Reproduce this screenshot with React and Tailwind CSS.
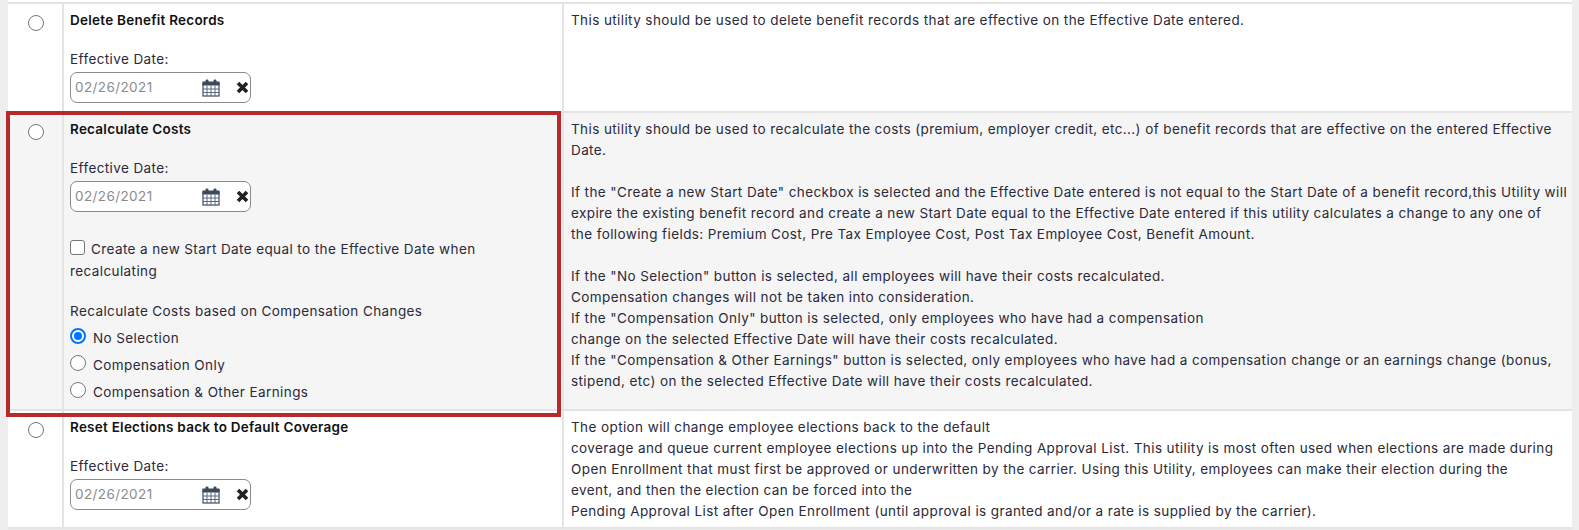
import React from 'react'

const DateField = () => (
  <div className="mt-[3px] flex h-[31px] w-[181px] items-center rounded-[7px] border border-[#8a8a8a] bg-white pl-1 pr-[1px]">
    <span className="text-[#8b8b8b]">02/26/2021</span>
    <svg className="ml-auto" width="18" height="18" viewBox="0 0 18 18">
      <rect x="1" y="4" width="16" height="13" fill="#fff" stroke="#3b4a5c" strokeWidth="1.2" />
      <rect x="0.5" y="2.5" width="17" height="4" fill="#3b4a5c" />
      <rect x="3.5" y="0.5" width="3" height="5" rx="1.2" fill="#3b4a5c" />
      <rect x="11.5" y="0.5" width="3" height="5" rx="1.2" fill="#3b4a5c" />
      <path d="M1 10h16M1 13.5h16M5 6.5V17M9 6.5V17M13 6.5V17" stroke="#5a6b80" strokeWidth="1" />
    </svg>
    <svg className="ml-[16px]" width="13" height="13" viewBox="0 0 13 13">
      <path d="M2 2l9 9M11 2l-9 9" stroke="#222" strokeWidth="3.6" />
    </svg>
  </div>
)

const Radio = ({ checked }) => (
  <span
    className={
      checked
        ? 'mb-[6px] inline-block h-[16px] w-[16px] shrink-0 rounded-full border-2 border-[#0075ff] bg-white p-[2px]'
        : 'inline-block h-[16px] w-[16px] shrink-0 rounded-full border border-[#767676] bg-white'
    }
  >
    {checked && <span className="block h-full w-full rounded-full bg-[#0075ff]" />}
  </span>
)

const Option = ({ checked, label }) => (
  <div className="flex h-[27px] items-center gap-[7px]">
    {checked ? <Radio checked /> : <span className="mb-[6px] flex"><Radio /></span>}
    {label}
  </div>
)

const Row = ({ title, children, text, shaded, height }) => (
  <div className={`flex border-b-2 border-[#e4e4e4] ${shaded ? 'bg-[#f5f5f5]' : 'bg-white'} ${height}`}>
    <div className="flex w-[56px] shrink-0 justify-center border-r-2 border-[#e4e4e4] pl-[2px] pt-[11px]">
      <Radio />
    </div>
    <div className="w-[500px] shrink-0 border-r-2 border-[#e4e4e4] pl-[6px] pt-[6px]">
      <div className="font-semibold leading-[20px] tracking-[0.25px] text-[#111]">{title}</div>
      <div className="mt-[19px] leading-[20px]">Effective Date:</div>
      <DateField />
      {children}
    </div>
    <div className="min-w-0 flex-1 pl-[7px] pr-[2px] pt-[6px] leading-[21px]">{text}</div>
  </div>
)

export default function App() {
  return (
    <div className="relative h-[530px] w-[1579px] overflow-hidden bg-[#eeeeee] pl-[8px] pr-[7px] font-['Inter',sans-serif] text-[13.5px] tracking-[0.4px] text-[#2a2a3a]">
      <div className="h-[2px] bg-white" />
      <div className="border-t-2 border-[#e4e4e4]">
        <Row
          title="Delete Benefit Records"
          height="h-[109px]"
          text="This utility should be used to delete benefit records that are effective on the Effective Date entered."
        />
        <Row
          title="Recalculate Costs"
          shaded
          height="h-[298px]"
          text={
            <>
              This utility should be used to recalculate the costs (premium, employer credit, etc...) of benefit records that are effective on the entered Effective
              <br />
              Date.
              <br /><br />
              If the "Create a new Start Date" checkbox is selected and the Effective Date entered is not equal to the Start Date of a benefit record,this Utility will
              <br />
              expire the existing benefit record and create a new Start Date equal to the Effective Date entered if this utility calculates a change to any one of
              <br />
              the following fields: Premium Cost, Pre Tax Employee Cost, Post Tax Employee Cost, Benefit Amount.
              <br /><br />
              If the "No Selection" button is selected, all employees will have their costs recalculated.
              <br />
              Compensation changes will not be taken into consideration.
              <br />
              If the "Compensation Only" button is selected, only employees who have had a compensation
              <br />
              change on the selected Effective Date will have their costs recalculated.
              <br />
              If the "Compensation &amp; Other Earnings" button is selected, only employees who have had a compensation change or an earnings change (bonus,
              <br />
              stipend, etc) on the selected Effective Date will have their costs recalculated.
            </>
          }
        >
          <div className="mt-[26px] leading-[22px]">
            <span className="mr-[6px] inline-block h-[15px] w-[15px] rounded-[3px] border border-[#767676] bg-white align-[-1px]" />
            Create a new Start Date equal to the Effective Date when recalculating
          </div>
          <div className="mt-[19px] leading-[20px]">Recalculate Costs based on Compensation Changes</div>
          <div className="mt-[4px]">
            <Option checked label="No Selection" />
            <Option label="Compensation Only" />
            <Option label="Compensation & Other Earnings" />
          </div>
        </Row>
        <Row
          title="Reset Elections back to Default Coverage"
          height="h-[118px]"
          text={
            <>
              The option will change employee elections back to the default
              <br />
              coverage and queue current employee elections up into the Pending Approval List. This utility is most often used when elections are made during
              <br />
              Open Enrollment that must first be approved or underwritten by the carrier. Using this Utility, employees can make their election during the
              <br />
              event, and then the election can be forced into the
              <br />
              Pending Approval List after Open Enrollment (until approval is granted and/or a rate is supplied by the carrier).
            </>
          }
        />
      </div>
      <div className="absolute left-[6px] top-[111px] h-[306px] w-[555px] border-4 border-[#b52b2b]" />
    </div>
  )
}
